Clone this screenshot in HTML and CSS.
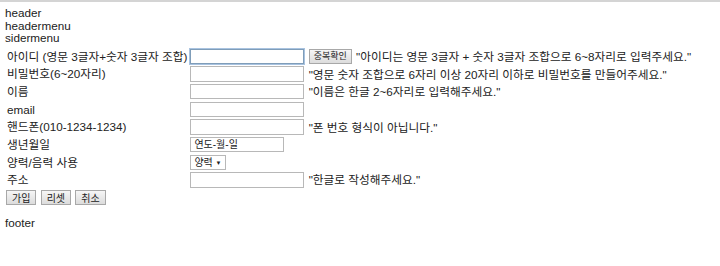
FILE: index.html
```html
<!DOCTYPE html>
<html lang="ko">
<head>
    <meta charset="UTF-8">
    <title>회원가입</title>
    <link rel="stylesheet" href="styles.css">
</head>
<body>
    <div class="top-line"></div>
    <div class="page">
        <div class="block">header</div>
        <div class="block">headermenu</div>
        <div class="block">sidermenu</div>
        <form class="join-form" onsubmit="return false;">
            <table class="join-table">
                <tr>
                    <td class="label">아이디 (영문 3글자+숫자 3글자 조합)</td>
                    <td>
                        <input type="text" class="field focused">
                        <button type="button" class="small-btn">중복확인</button>
                        <span class="hint">"아이디는 영문 3글자 + 숫자 3글자 조합으로 6~8자리로 입력주세요."</span>
                    </td>
                </tr>
                <tr>
                    <td class="label">비밀번호(6~20자리)</td>
                    <td>
                        <input type="password" class="field">
                        <span class="hint">"영문 숫자 조합으로 6자리 이상 20자리 이하로 비밀번호를 만들어주세요."</span>
                    </td>
                </tr>
                <tr>
                    <td class="label">이름</td>
                    <td>
                        <input type="text" class="field">
                        <span class="hint">"이름은 한글 2~6자리로 입력해주세요."</span>
                    </td>
                </tr>
                <tr>
                    <td class="label">email</td>
                    <td><input type="text" class="field"></td>
                </tr>
                <tr>
                    <td class="label">핸드폰(010-1234-1234)</td>
                    <td>
                        <input type="text" class="field">
                        <span class="hint">"폰 번호 형식이 아닙니다."</span>
                    </td>
                </tr>
                <tr>
                    <td class="label">생년월일</td>
                    <td><span class="date-box">연도-월-일</span></td>
                </tr>
                <tr>
                    <td class="label">양력/음력 사용</td>
                    <td><span class="select-box">양력 <span class="arrow">▼</span></span></td>
                </tr>
                <tr>
                    <td class="label">주소</td>
                    <td>
                        <input type="text" class="field">
                        <span class="hint">"한글로 작성해주세요."</span>
                    </td>
                </tr>
                <tr>
                    <td colspan="2" class="btn-row">
                        <button type="submit" class="small-btn">가입</button>
                        <button type="reset" class="small-btn">리셋</button>
                        <button type="button" class="small-btn">취소</button>
                    </td>
                </tr>
            </table>
        </form>
        <div class="block footer">footer</div>
    </div>
</body>
</html>
```

FILE: styles.css
```css
* {
    box-sizing: border-box;
}

body {
    margin: 0;
    background: #FFFFFF;
    color: #222222;
    font-family: "Liberation Sans", "Noto Sans CJK KR", sans-serif;
    font-size: 11.7px;
}

.top-line {
    height: 2px;
    background: #D4D4D4;
}

.page {
    padding: 5px 5px;
}

.block {
    line-height: 12.5px;
}

.footer {
    margin-top: 10px;
}

.join-table {
    border-collapse: separate;
    border-spacing: 0 2px;
    margin-top: 2px;
}

.join-table td {
    padding: 0 1px;
    height: 15.5px;
    vertical-align: middle;
    white-space: nowrap;
    line-height: 13px;
}

.join-table .label {
    padding-left: 2px;
    padding-right: 2px;
}

.field {
    width: 114px;
    height: 15.5px;
    border: 1px solid #B8B8B8;
    padding: 0 2px;
    margin: 0;
    vertical-align: middle;
    font-size: 11px;
}

.field.focused {
    border-color: #7F9DB9;
    outline: 1px solid #A9C3E0;
}

.small-btn {
    height: 15.5px;
    padding: 0 4px;
    margin: 0 0 0 1px;
    border: 1px solid #A8A8A8;
    background: linear-gradient(#F6F6F6, #DCDCDC);
    color: #222222;
    font-family: "Noto Sans CJK KR", sans-serif;
    font-size: 9px;
    line-height: 12px;
    vertical-align: middle;
}

.btn-row .small-btn {
    margin: 0 1px 0 0;
    height: 15px;
    padding: 0 5px;
    font-size: 10px;
}

.hint {
    margin-left: 1px;
    vertical-align: middle;
}

.date-box {
    display: inline-block;
    width: 94px;
    height: 15.5px;
    border: 1px solid #B8B8B8;
    padding: 0 3px;
    font-size: 10px;
    line-height: 13px;
    vertical-align: middle;
}

.select-box {
    display: inline-block;
    height: 15px;
    border: 1px solid #B8B8B8;
    padding: 0 3px;
    font-size: 10px;
    line-height: 13px;
    vertical-align: middle;
}

.arrow {
    font-size: 6px;
    vertical-align: 1px;
}
```
